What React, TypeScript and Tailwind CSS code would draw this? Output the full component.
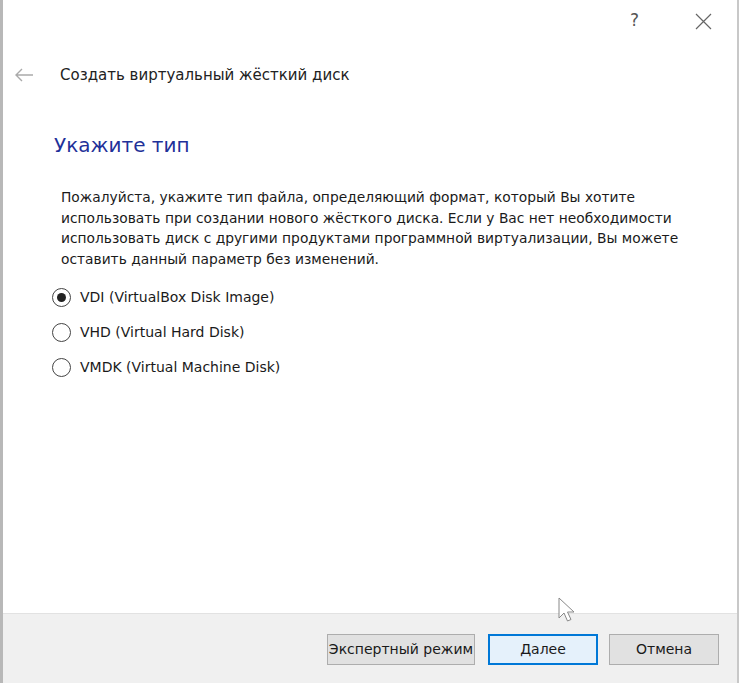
import React from "react";

const font = { fontFamily: "Tahoma, 'DejaVu Sans', 'Liberation Sans', sans-serif" };

function Radio({ checked, label }: { checked?: boolean; label: string }) {
  return (
    <div className="flex items-center h-[35px]">
      <span className="w-[19px] h-[19px] rounded-full border border-[#444] bg-white flex items-center justify-center">
        {checked && <span className="w-[9px] h-[9px] rounded-full bg-[#222]" />}
      </span>
      <span className="ml-[9px] text-[14px] text-[#1a1a1a]">{label}</span>
    </div>
  );
}

export default function App() {
  return (
    <div className="w-[741px] h-[683px] bg-white flex overflow-hidden" style={font}>
      <div className="w-[3px] bg-[#b8b8b8]" />
      <div className="w-[734px] flex flex-col relative">
        <div className="h-[10px]" />
        <div className="flex justify-end items-center h-[22px] pr-[25px] text-[#555]">
          <span className="text-[17px] mr-[56px]">?</span>
          <svg width="17" height="17" viewBox="0 0 17 17" className="text-[#666]">
            <path d="M1 1 L16 16 M16 1 L1 16" stroke="currentColor" strokeWidth="1.2" fill="none" />
          </svg>
        </div>
        <div className="flex items-center h-[42px] mt-[22px]">
          <svg width="20" height="14" viewBox="0 0 20 14" className="ml-[11px] text-[#aaa]">
            <path d="M19 7 H2 M8 1 L2 7 L8 13" stroke="currentColor" strokeWidth="1.4" fill="none" />
          </svg>
          <span className="ml-[26px] text-[15px] text-[#222]">Создать виртуальный жёсткий диск</span>
        </div>
        <div className="pl-[51px] mt-[35px] text-[20px] text-[#1f3199] leading-[28px]">Укажите тип</div>
        <div className="pl-[58px] mt-[28px] text-[13.8px] leading-[20.5px] text-[#1a1a1a] whitespace-nowrap">
          Пожалуйста, укажите тип файла, определяющий формат, который Вы хотите
          <br />
          использовать при создании нового жёсткого диска. Если у Вас нет необходимости
          <br />
          использовать диск с другими продуктами программной виртуализации, Вы можете
          <br />
          оставить данный параметр без изменений.
        </div>
        <div className="pl-[49px] mt-[11px] flex flex-col">
          <Radio checked label="VDI (VirtualBox Disk Image)" />
          <Radio label="VHD (Virtual Hard Disk)" />
          <Radio label="VMDK (Virtual Machine Disk)" />
        </div>
        <div className="flex-1" />
        <div className="h-[70px] bg-[#f0f0f0] border-t border-[#e2e2e2] flex items-start justify-end pt-[20px] pr-[18px] gap-[13px] text-[14px] text-[#1a1a1a]">
          <button className="w-[148px] h-[31px] bg-[#e1e1e1] border border-[#adadad]">Экспертный режим</button>
          <button className="w-[110px] h-[31px] bg-[#e5f1fb] border-2 border-[#0078d7] mr-[-2px]">Далее</button>
          <button className="w-[110px] h-[31px] bg-[#e1e1e1] border border-[#adadad]">Отмена</button>
        </div>
        <svg width="24" height="28" viewBox="0 0 24 28" className="absolute left-[554px] top-[597px]">
          <path d="M2 1 L2 21 L7 16 L10.5 24 L14 22.5 L10.5 15 L17 15 Z" fill="white" stroke="#888" strokeWidth="1" />
        </svg>
      </div>
      <div className="w-[2px] bg-[#c8c8c8]" />
      <div className="flex-1 bg-white" />
    </div>
  );
}
